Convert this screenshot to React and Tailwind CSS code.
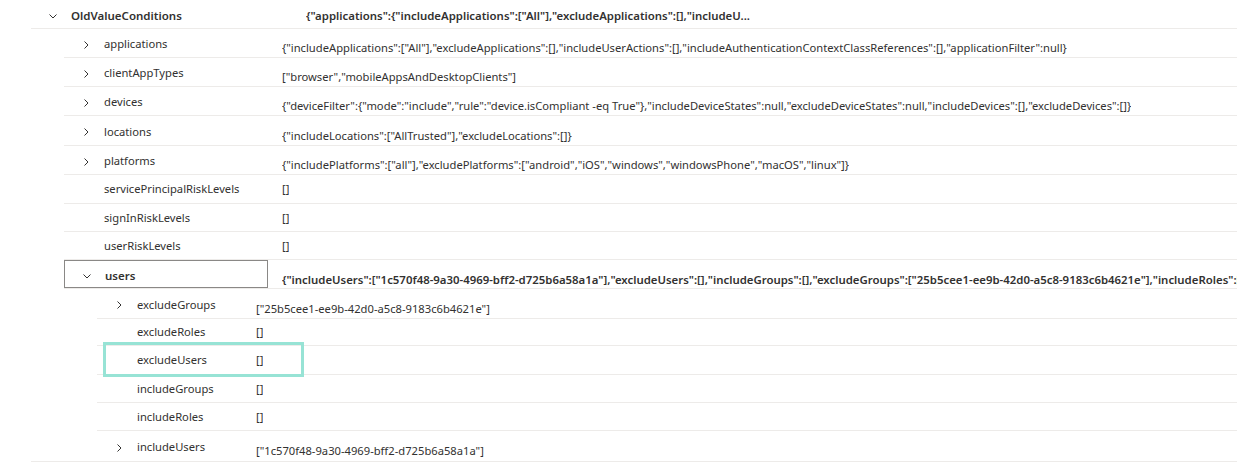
const font = { fontFamily: '"Segoe UI", "Noto Sans", sans-serif' };

function Chevron({ open }) {
  return (
    <svg width="10" height="10" viewBox="0 0 10 10" className="shrink-0 text-[#323130]">
      {open ? (
        <path d="M1.5 3.5 L5 7 L8.5 3.5" fill="none" stroke="currentColor" strokeWidth="1" />
      ) : (
        <path d="M3.5 1.5 L7 5 L3.5 8.5" fill="none" stroke="currentColor" strokeWidth="1" />
      )}
    </svg>
  );
}

const rows = [
  { depth: 0, label: 'OldValueConditions', open: true, bold: true, h: 29, value: '{"applications":{"includeApplications":["All"],"excludeApplications":[],"includeU...' },
  { depth: 1, label: 'applications', closed: true, h: 29, value: '{"includeApplications":["All"],"excludeApplications":[],"includeUserActions":[],"includeAuthenticationContextClassReferences":[],"applicationFilter":null}' },
  { depth: 1, label: 'clientAppTypes', closed: true, h: 29, value: '["browser","mobileAppsAndDesktopClients"]' },
  { depth: 1, label: 'devices', closed: true, h: 29, value: '{"deviceFilter":{"mode":"include","rule":"device.isCompliant -eq True"},"includeDeviceStates":null,"excludeDeviceStates":null,"includeDevices":[],"excludeDevices":[]}' },
  { depth: 1, label: 'locations', closed: true, h: 30, value: '{"includeLocations":["AllTrusted"],"excludeLocations":[]}' },
  { depth: 1, label: 'platforms', closed: true, h: 29, value: '{"includePlatforms":["all"],"excludePlatforms":["android","iOS","windows","windowsPhone","macOS","linux"]}' },
  { depth: 1, label: 'servicePrincipalRiskLevels', h: 29, value: '[]' },
  { depth: 1, label: 'signInRiskLevels', h: 28, value: '[]' },
  { depth: 1, label: 'userRiskLevels', h: 28, value: '[]' },
  { depth: 1, label: 'users', open: true, bold: true, focused: true, h: 29, value: '{"includeUsers":["1c570f48-9a30-4969-bff2-d725b6a58a1a"],"excludeUsers":[],"includeGroups":[],"excludeGroups":["25b5cee1-ee9b-42d0-a5c8-9183c6b4621e"],"includeRoles":[],"excludeRoles":[]}' },
  { depth: 2, label: 'excludeGroups', closed: true, h: 30, value: '["25b5cee1-ee9b-42d0-a5c8-9183c6b4621e"]' },
  { depth: 2, label: 'excludeRoles', h: 27, value: '[]' },
  { depth: 2, label: 'excludeUsers', h: 29, value: '[]', highlight: true },
  { depth: 2, label: 'includeGroups', h: 28, value: '[]' },
  { depth: 2, label: 'includeRoles', h: 28, value: '[]' },
  { depth: 2, label: 'includeUsers', closed: true, h: 31, value: '["1c570f48-9a30-4969-bff2-d725b6a58a1a"]', last: true },
];

const indent = ['ml-[31px]', 'ml-[64px]', 'ml-[97px]'];
const labelWidth = ['w-[275px]', 'w-[218px]', 'w-[159px]'];

function Row({ row }) {
  const expandable = row.open || row.closed;
  const dropValue = expandable && row.depth > 0;
  return (
    <div
      className={`relative flex ${row.last ? 'ml-[31px] pl-[66px]' : indent[row.depth]} border-b border-[#edebe9]`}
      style={{ height: row.h }}
    >
      <div
        className={`flex shrink-0 items-center ${row.focused ? 'mr-[14px] w-[204px] border border-[#8a8886]' : labelWidth[row.depth]} ${expandable ? 'pt-[3px]' : 'pt-[1px]'}`}
      >
        <div className="flex w-[40px] shrink-0 justify-end pr-[13px]">
          {expandable ? <Chevron open={row.open} /> : null}
        </div>
        <span className={`whitespace-nowrap ${row.bold ? 'text-[11.5px] font-semibold' : ''}`}>{row.label}</span>
      </div>
      <div
        className={`flex items-center overflow-hidden whitespace-nowrap ${row.bold ? 'text-[11.4px] font-semibold' : ''} ${dropValue ? 'pt-[11px]' : row.depth === 0 ? 'pt-[3px]' : 'pt-[1px]'}`}
      >
        {row.value}
      </div>
      {row.highlight ? (
        <div className="pointer-events-none absolute left-[6px] top-[-4px] h-[35px] w-[201px] border-[3px] border-[#97e3d5]" />
      ) : null}
    </div>
  );
}

export default function App() {
  return (
    <div className="h-[465px] w-[1237px] overflow-hidden bg-white text-[11.2px] text-[#323130]" style={font}>
      {rows.map((row) => (
        <Row key={row.depth + row.label} row={row} />
      ))}
    </div>
  );
}
